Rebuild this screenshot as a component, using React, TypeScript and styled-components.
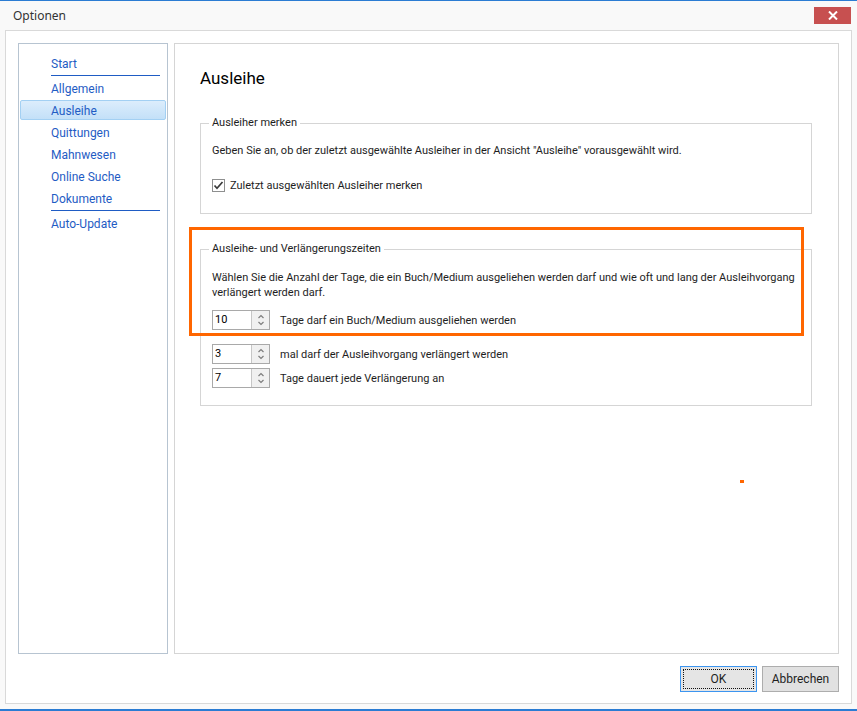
import React from "react";
import styled, { createGlobalStyle } from "styled-components";

const FONT = `Roboto, "Noto Sans", sans-serif`;

const Global = createGlobalStyle`
  html, body { margin: 0; padding: 0; background: #ffffff; }
  body { font-family: ${FONT}; font-size: 11px; color: #1e1e1e; }
  * { box-sizing: border-box; }
`;

const Window = styled.div`
  position: relative;
  width: 857px;
  height: 711px;
  background: #f9f9f9;
  border-top: 1px solid #2b7cd3;
  border-bottom: 2px solid #2b7cd3;
  display: flex;
  flex-direction: column;
`;

const TitleBar = styled.div`
  height: 29px;
  display: flex;
  justify-content: space-between;
  align-items: flex-start;
  padding-left: 13px;
  padding-right: 6px;
`;

const Title = styled.div`
  line-height: 29px;
  font-family: "Noto Sans", sans-serif;
  font-size: 12px;
  color: #333;
`;

const CloseButton = styled.div`
  margin-top: 6px;
  width: 37px;
  height: 17px;
  background: #c75050;
  display: flex;
  align-items: center;
  justify-content: center;
`;

const Body = styled.div`
  margin: 0 5px;
  height: 674px;
  border: 1px solid #d9d9d9;
  background: #ffffff;
  padding: 12px 12px 10px 12px;
  display: flex;
  flex-direction: column;
`;

const Panels = styled.div`
  display: flex;
  gap: 6px;
  height: 611px;
`;

const Nav = styled.div`
  flex: 0 0 150px;
  width: 150px;
  border: 1px solid #b7c4d1;
  padding-top: 9px;
  display: flex;
  flex-direction: column;
`;

const NavItem = styled.div<{ $active?: boolean }>`
  height: 20px;
  margin: 0 1px 2px 1px;
  border: 1px solid ${(p) => (p.$active ? "#a3d0f3" : "transparent")};
  border-radius: 2px;
  background: ${(p) =>
    p.$active ? "linear-gradient(#dcedfc, #c3e0f8)" : "transparent"};
  padding: 2px 0 0 30px;
  line-height: 16px;
  font-size: 12px;
  color: #1f5cc4;
  white-space: nowrap;
`;

const NavSeparator = styled.div`
  height: 1px;
  margin: 0 7px 2px 32px;
  background: #1f5cc4;
`;

const Content = styled.div`
  flex: 1 1 auto;
  min-width: 0;
  border: 1px solid #d5d5d5;
  padding: 23px 26px 0 25px;
  display: flex;
  flex-direction: column;
`;

const Heading = styled.h1`
  margin: 0;
  font-size: 17px;
  line-height: 22px;
  font-weight: normal;
  color: #000;
`;

const Group = styled.fieldset<{ $top: number; $padTop: number; $padBottom: number }>`
  margin: ${(p) => p.$top}px 0 0 0;
  border: 1px solid #d5d5d5;
  padding: ${(p) => p.$padTop}px 10px ${(p) => p.$padBottom}px 11px;
  min-width: 0;
`;

const Legend = styled.legend`
  margin-left: -3px;
  padding: 0 3px;
  line-height: 16px;
  color: #1e1e1e;
`;

const Description = styled.div<{ $lh: number }>`
  line-height: ${(p) => p.$lh}px;
  white-space: nowrap;
`;

const CheckRow = styled.label`
  margin-top: 18px;
  display: flex;
  align-items: center;
  gap: 5px;
  height: 16px;
`;

const CheckBox = styled.span`
  width: 13px;
  height: 13px;
  border: 1px solid #8e8f8f;
  background: #fff;
  display: flex;
  align-items: center;
  justify-content: center;
`;

const SpinRow = styled.div<{ $top: number }>`
  margin-top: ${(p) => p.$top}px;
  display: flex;
  align-items: center;
  gap: 10px;
  height: 20px;
`;

const Spin = styled.div`
  flex: 0 0 58px;
  width: 58px;
  height: 20px;
  border: 1px solid #a9a9a9;
  display: flex;
  background: #fff;
`;

const SpinValue = styled.div`
  flex: 1;
  padding-left: 2px;
  line-height: 18px;
  color: #000;
`;

const SpinButtons = styled.div`
  width: 18px;
  border-left: 1px solid #c6c6c6;
  background: #f0f0f0;
  display: flex;
  align-items: center;
  justify-content: center;
`;

const Footer = styled.div`
  margin-top: 12px;
  display: flex;
  justify-content: flex-end;
  gap: 5px;
`;

const Button = styled.div<{ $default?: boolean }>`
  width: 77px;
  height: 26px;
  border: 1px solid ${(p) => (p.$default ? "#3c95f0" : "#adadad")};
  background: ${(p) => (p.$default ? "#e5e5e5" : "#e1e1e1")};
  padding: 2px;
  display: flex;
`;

const ButtonFace = styled.div<{ $focus?: boolean }>`
  flex: 1;
  border: 1px dotted ${(p) => (p.$focus ? "#111" : "transparent")};
  display: flex;
  align-items: center;
  justify-content: center;
  font-size: 12px;
  color: #1e1e1e;
`;

const Highlight = styled.div`
  position: absolute;
  left: 189px;
  top: 226px;
  width: 615px;
  height: 109px;
  border: 3px solid #ff6600;
  pointer-events: none;
`;

const Dot = styled.div`
  position: absolute;
  left: 740px;
  top: 479px;
  width: 4px;
  height: 3px;
  background: #ff6600;
`;

const Check = () => (
  <svg width="11" height="11" viewBox="0 0 11 11">
    <polyline points="1.5,5.5 4,8.3 9.5,2" fill="none" stroke="#3a3a3a" strokeWidth="1.7" />
  </svg>
);

const Arrows = () => (
  <svg width="8" height="14" viewBox="0 0 8 14">
    <polyline points="1.5,5 4,2.5 6.5,5" fill="none" stroke="#7d7d7d" strokeWidth="1.2" />
    <polyline points="1.5,9 4,11.5 6.5,9" fill="none" stroke="#7d7d7d" strokeWidth="1.2" />
  </svg>
);

const CloseX = () => (
  <svg width="10" height="9" viewBox="0 0 10 9">
    <path d="M1 0.5 L9 8.5 M9 0.5 L1 8.5" stroke="#ffffff" strokeWidth="2" />
  </svg>
);

const SpinBox = ({ value }: { value: string }) => (
  <Spin>
    <SpinValue>{value}</SpinValue>
    <SpinButtons>
      <Arrows />
    </SpinButtons>
  </Spin>
);

export default function App() {
  return (
    <>
      <Global />
      <Window>
        <TitleBar>
          <Title>Optionen</Title>
          <CloseButton>
            <CloseX />
          </CloseButton>
        </TitleBar>
        <Body>
          <Panels>
            <Nav>
              <NavItem>Start</NavItem>
              <NavSeparator />
              <NavItem>Allgemein</NavItem>
              <NavItem $active>Ausleihe</NavItem>
              <NavItem>Quittungen</NavItem>
              <NavItem>Mahnwesen</NavItem>
              <NavItem>Online Suche</NavItem>
              <NavItem>Dokumente</NavItem>
              <NavSeparator />
              <NavItem>Auto-Update</NavItem>
            </Nav>
            <Content>
              <Heading>Ausleihe</Heading>
              <Group $top={26} $padTop={12} $padBottom={20}>
                <Legend>Ausleiher merken</Legend>
                <Description $lh={16}>
                  Geben Sie an, ob der zuletzt ausgewählte Ausleiher in der Ansicht "Ausleihe" vorausgewählt wird.
                </Description>
                <CheckRow>
                  <CheckBox>
                    <Check />
                  </CheckBox>
                  Zuletzt ausgewählten Ausleiher merken
                </CheckRow>
              </Group>
              <Group $top={27} $padTop={13} $padBottom={17}>
                <Legend>Ausleihe- und Verlängerungszeiten</Legend>
                <Description $lh={15}>
                  Wählen Sie die Anzahl der Tage, die ein Buch/Medium ausgeliehen werden darf und wie oft und lang der Ausleihvorgang
                  <br />
                  verlängert werden darf.
                </Description>
                <SpinRow $top={10}>
                  <SpinBox value="10" />
                  Tage darf ein Buch/Medium ausgeliehen werden
                </SpinRow>
                <SpinRow $top={14}>
                  <SpinBox value="3" />
                  mal darf der Ausleihvorgang verlängert werden
                </SpinRow>
                <SpinRow $top={4}>
                  <SpinBox value="7" />
                  Tage dauert jede Verlängerung an
                </SpinRow>
              </Group>
            </Content>
          </Panels>
          <Footer>
            <Button $default>
              <ButtonFace $focus>OK</ButtonFace>
            </Button>
            <Button>
              <ButtonFace>Abbrechen</ButtonFace>
            </Button>
          </Footer>
        </Body>
        <Highlight />
        <Dot />
      </Window>
    </>
  );
}
